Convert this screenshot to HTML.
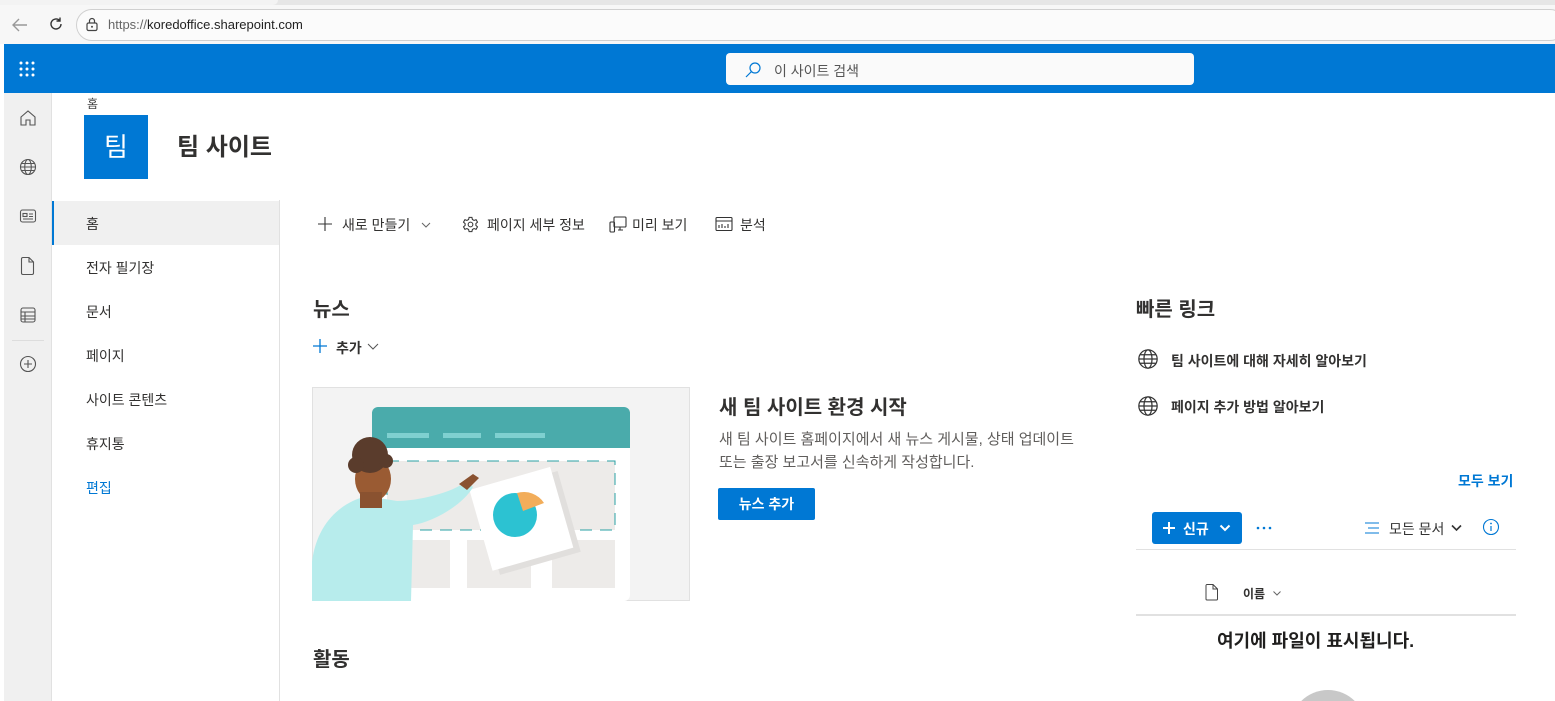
<!DOCTYPE html>
<html style="width:1555px;height:701px;overflow:hidden"><head><meta charset="utf-8"><style>
*{box-sizing:border-box;margin:0;padding:0}
body{width:1555px;height:701px;overflow:hidden;background:#fff;font-family:"Liberation Sans","Noto Sans CJK KR",sans-serif;color:#323130;position:relative}
.abs{position:absolute}
.t{font-size:14px;color:#323130}
</style></head><body>
<div class="abs" style="left:0;top:0;width:1555px;height:44px;background:#f7f7f7"></div>
<div class="abs" style="left:0;top:0;width:1555px;height:5px;background:#e6e6e6"></div>
<div class="abs" style="left:0;top:0;width:278px;height:5px;background:#f3f3f3;border-radius:0 0 6px 0"></div>
<div class="abs" style="left:76px;top:9px;width:1490px;height:32px;border:1px solid #d0d0d0;border-radius:16px;background:#fbfbfb"></div>
<svg class="abs" style="left:10px;top:16px" width="20" height="18" viewBox="0 0 20 18"><path d="M17 9H3M9 3L3 9l6 6" stroke="#999" stroke-width="1.4" fill="none"/></svg>
<svg class="abs" style="left:48px;top:16px" width="16" height="16" viewBox="0 0 16 16"><path d="M13 8a5 5 0 1 1-1.5-3.6M12 1.5v3.5H8.5" stroke="#333" stroke-width="1.4" fill="none"/></svg>
<svg class="abs" style="left:85px;top:16px" width="14" height="16" viewBox="0 0 14 16"><rect x="2" y="7" width="10" height="7.5" rx="1.5" stroke="#444" fill="none" stroke-width="1.2"/><path d="M4.5 7V5a2.5 2.5 0 0 1 5 0v2" stroke="#444" fill="none" stroke-width="1.2"/><circle cx="7" cy="10.7" r="1" fill="#444"/></svg>
<div class="abs" style="left:108px;top:17px;font-size:13px;color:#222"><span style="color:#666">https://</span>koredoffice.sharepoint.com</div>
<div class="abs" style="left:4px;top:44px;width:1551px;height:49px;background:#0078d4"></div>
<svg class="abs" style="left:19px;top:61px" width="16" height="16"><g fill="#fff"><circle cx="2" cy="2" r="1.5"/><circle cx="8" cy="2" r="1.5"/><circle cx="14" cy="2" r="1.5"/><circle cx="2" cy="8" r="1.5"/><circle cx="8" cy="8" r="1.5"/><circle cx="14" cy="8" r="1.5"/><circle cx="2" cy="14" r="1.5"/><circle cx="8" cy="14" r="1.5"/><circle cx="14" cy="14" r="1.5"/></g></svg>
<div class="abs" style="left:726px;top:53px;width:468px;height:32px;background:#fafafa;border-radius:4px"></div>
<svg class="abs" style="left:744px;top:61px" width="18" height="18"><circle cx="11" cy="7" r="5" stroke="#0078d4" fill="none" stroke-width="1.2"/><path d="M7.5 10.5L2 16" stroke="#0078d4" stroke-width="1.2"/></svg>
<div class="abs" style="left:774px;top:61px;font-size:14px;color:#555">이 사이트 검색</div>
<div class="abs" style="left:4px;top:93px;width:48px;height:608px;background:#f0f0f0;border-right:1px solid #e1e1e1"></div>
<svg class="abs" style="left:19px;top:109px" width="18" height="18" viewBox="0 0 18 18"><path d="M2 8L9 2l7 6v8h-5v-5H7v5H2z" stroke="#555" fill="none" stroke-width="1.1"/></svg>
<svg class="abs" style="left:19px;top:158px" width="18" height="18" viewBox="0 0 18 18"><g stroke="#555" fill="none" stroke-width="1.1"><circle cx="9" cy="9" r="7.5"/><ellipse cx="9" cy="9" rx="3.3" ry="7.5"/><path d="M1.5 9h15M2.5 5.5h13M2.5 12.5h13"/></g></svg>
<svg class="abs" style="left:19px;top:207px" width="18" height="18" viewBox="0 0 18 18"><g stroke="#555" fill="none" stroke-width="1.1"><rect x="1.5" y="3" width="15" height="12" rx="2"/><rect x="4" y="6.5" width="4" height="3"/><path d="M10 7h4M10 9.5h4M4 12h10"/></g></svg>
<svg class="abs" style="left:19px;top:256px" width="18" height="20" viewBox="0 0 18 20"><path d="M4 1.5h6l4.5 4.5v11a1.5 1.5 0 0 1-1.5 1.5H4A1.5 1.5 0 0 1 2.5 17V3A1.5 1.5 0 0 1 4 1.5zM10 1.5V6h4.5" stroke="#555" fill="none" stroke-width="1.1"/></svg>
<svg class="abs" style="left:19px;top:306px" width="18" height="18" viewBox="0 0 18 18"><g stroke="#555" fill="none" stroke-width="1.1"><rect x="2" y="2" width="14" height="14" rx="2"/><path d="M2 6h14M2 10h14M2 13h14M6 6v10"/></g></svg>
<div class="abs" style="left:12px;top:340px;width:32px;height:1px;background:#ddd"></div>
<svg class="abs" style="left:19px;top:355px" width="18" height="18" viewBox="0 0 18 18"><g stroke="#555" fill="none" stroke-width="1.1"><circle cx="9" cy="9" r="7.5"/><path d="M9 5v8M5 9h8"/></g></svg>
<div class="abs" style="left:87px;top:95px;font-size:12px;color:#444">홈</div>
<div class="abs" style="left:84px;top:115px;width:64px;height:64px;background:#0078d4;color:#fff;font-size:26px;text-align:center;line-height:64px">팀</div>
<div class="abs" style="left:177px;top:127px;font-size:24px;font-weight:bold;color:#323130">팀 사이트</div>
<div class="abs" style="left:279px;top:200px;width:1px;height:501px;background:#e1e1e1"></div>
<div class="abs" style="left:52px;top:201px;width:227px;height:44px;background:#f0f0f0;border-left:2px solid #0078d4"></div>
<div class="abs t" style="left:86px;top:214px">홈</div>
<div class="abs t" style="left:86px;top:258px">전자 필기장</div>
<div class="abs t" style="left:86px;top:302px">문서</div>
<div class="abs t" style="left:86px;top:346px">페이지</div>
<div class="abs t" style="left:86px;top:390px">사이트 콘텐츠</div>
<div class="abs t" style="left:86px;top:434px">휴지통</div>
<div class="abs t" style="left:86px;top:478px;color:#0078d4">편집</div>
<svg class="abs" style="left:318px;top:217px" width="14" height="14"><path d="M7 0v14M0 7h14" stroke="#333" stroke-width="1.1"/></svg>
<div class="abs t" style="left:342px;top:215px">새로 만들기</div>
<svg class="abs" style="left:421px;top:222px" width="10" height="6"><path d="M1 1l4 4 4-4" stroke="#666" fill="none"/></svg>
<svg class="abs" style="left:462px;top:216px" width="17" height="17" viewBox="0 0 18 18"><g stroke="#333" fill="none" stroke-width="1.1"><circle cx="9" cy="9" r="2.5"/><path d="M7.5 1.5h3l.5 2.2 1.8 1 2.1-.8 1.5 2.6-1.7 1.5v2l1.7 1.5-1.5 2.6-2.1-.8-1.8 1-.5 2.2h-3l-.5-2.2-1.8-1-2.1.8-1.5-2.6 1.7-1.5V8L1.6 6.5l1.5-2.6 2.1.8 1.8-1z"/></g></svg>
<div class="abs t" style="left:487px;top:215px">페이지 세부 정보</div>
<svg class="abs" style="left:609px;top:215px" width="18" height="19" viewBox="0 0 18 19"><g stroke="#333" fill="none" stroke-width="1.1"><rect x="5" y="2" width="12" height="10" rx="1"/><rect x="1" y="7" width="4.5" height="10" rx="1"/><path d="M9 15h5M11 12v3"/></g></svg>
<div class="abs t" style="left:632px;top:215px">미리 보기</div>
<svg class="abs" style="left:715px;top:216px" width="18" height="16" viewBox="0 0 18 16"><g stroke="#333" fill="none" stroke-width="1.1"><rect x="1" y="1.5" width="16" height="13" rx="1"/><path d="M1 5h16M4 12V9M7 12V8M10 12V10M13 12V8"/></g></svg>
<div class="abs t" style="left:740px;top:215px">분석</div>
<div class="abs" style="left:313px;top:293px;font-size:20px;font-weight:bold">뉴스</div>
<svg class="abs" style="left:313px;top:339px" width="14" height="14"><path d="M7 0v14M0 7h14" stroke="#0078d4" stroke-width="1.3"/></svg>
<div class="abs" style="left:336px;top:338px;font-size:14px;font-weight:bold">추가</div>
<svg class="abs" style="left:367px;top:343px" width="12" height="7"><path d="M1 1l5 5 5-5" stroke="#555" fill="none"/></svg>
<svg class="abs" style="left:312px;top:387px" width="378" height="214" viewBox="0 0 378 214">
<rect x="0.5" y="0.5" width="377" height="213" fill="#f3f3f3" stroke="#e1e1e1"/>
<rect x="60" y="20" width="258" height="194" rx="6" fill="#fff"/>
<path d="M66 20h246a6 6 0 0 1 6 6v35H60V26a6 6 0 0 1 6-6z" fill="#4aabab"/>
<rect x="75" y="46" width="42" height="5" fill="#7fd0d0"/><rect x="131" y="46" width="38" height="5" fill="#7fd0d0"/><rect x="183" y="46" width="50" height="5" fill="#7fd0d0"/>
<rect x="75" y="74" width="228" height="69" fill="#edebe9" stroke="#2aa0a4" stroke-dasharray="12 8"/>
<rect x="90" y="153" width="48" height="48" fill="#edebe9"/><rect x="155" y="153" width="64" height="48" fill="#edebe9"/><rect x="240" y="153" width="63" height="48" fill="#edebe9"/>
<g transform="rotate(-16 208 127)"><rect x="172" y="96" width="84" height="84" fill="#e1dfdd"/><rect x="166" y="90" width="84" height="84" fill="#fff"/></g>
<circle cx="203" cy="128" r="22" fill="#2cc2d2"/>
<path d="M205 106l6 18 21-8a24 24 0 0 0-27-10z" fill="#f2ad5a"/>
<path d="M0 214V175c5-40 30-60 55-66l30 5c20 0 55-8 70-20l6 6c-10 18-40 35-60 38l-2 76z" fill="#b7ecec"/>
<path d="M147 97l14-10 6 4-12 12z" fill="#8a5230"/>
<ellipse cx="61" cy="92" rx="18" ry="22" fill="#9a5b33"/>
<path d="M48 105h22v16H48z" fill="#8a5230"/>
<circle cx="58" cy="68" r="18" fill="#5a3c2c"/><circle cx="44" cy="78" r="8" fill="#5a3c2c"/><circle cx="74" cy="74" r="7" fill="#5a3c2c"/>
</svg>
<div class="abs" style="left:719px;top:391px;font-size:20px;font-weight:bold">새 팀 사이트 환경 시작</div>
<div class="abs" style="left:719px;top:428px;font-size:15px;color:#605e5c;line-height:23px;white-space:nowrap">새 팀 사이트 홈페이지에서 새 뉴스 게시물, 상태 업데이트<br>또는 출장 보고서를 신속하게 작성합니다.</div>
<div class="abs" style="left:718px;top:488px;width:97px;height:32px;background:#0078d4;border-radius:2px;color:#fff;font-size:14px;font-weight:bold;text-align:center;line-height:32px">뉴스 추가</div>
<div class="abs" style="left:313px;top:643px;font-size:20px;font-weight:bold">활동</div>
<div class="abs" style="left:1136px;top:293px;font-size:20px;font-weight:bold">빠른 링크</div>
<svg class="abs" style="left:1137px;top:348px" width="22" height="22" viewBox="0 0 18 18"><g stroke="#333" fill="none" stroke-width="1"><circle cx="9" cy="9" r="7.5"/><ellipse cx="9" cy="9" rx="3.3" ry="7.5"/><path d="M1.5 9h15M2.5 5.5h13M2.5 12.5h13"/></g></svg>
<div class="abs" style="left:1171px;top:351px;font-size:14px;font-weight:bold">팀 사이트에 대해 자세히 알아보기</div>
<svg class="abs" style="left:1137px;top:395px" width="22" height="22" viewBox="0 0 18 18"><g stroke="#333" fill="none" stroke-width="1"><circle cx="9" cy="9" r="7.5"/><ellipse cx="9" cy="9" rx="3.3" ry="7.5"/><path d="M1.5 9h15M2.5 5.5h13M2.5 12.5h13"/></g></svg>
<div class="abs" style="left:1171px;top:397px;font-size:14px;font-weight:bold">페이지 추가 방법 알아보기</div>
<div class="abs" style="left:1458px;top:471px;font-size:14px;font-weight:bold;color:#0078d4">모두 보기</div>
<div class="abs" style="left:1152px;top:512px;width:90px;height:32px;background:#0078d4;border-radius:3px"></div>
<svg class="abs" style="left:1162px;top:521px" width="14" height="14"><path d="M7 1v12M1 7h12" stroke="#fff" stroke-width="2"/></svg>
<div class="abs" style="left:1183px;top:519px;font-size:14px;font-weight:bold;color:#fff">신규</div>
<svg class="abs" style="left:1219px;top:524px" width="12" height="8"><path d="M1.5 1.5l4.5 4.5 4.5-4.5" stroke="#fff" stroke-width="2" fill="none"/></svg>
<svg class="abs" style="left:1256px;top:526px" width="16" height="4"><g fill="#0078d4"><circle cx="2" cy="2" r="1.3"/><circle cx="8" cy="2" r="1.3"/><circle cx="14" cy="2" r="1.3"/></g></svg>
<svg class="abs" style="left:1364px;top:520px" width="16" height="16"><path d="M1 3h14M4 8h11M1 13h14" stroke="#0078d4" stroke-width="1.1"/></svg>
<div class="abs" style="left:1389px;top:519px;font-size:14px;color:#333">모든 문서</div>
<svg class="abs" style="left:1451px;top:524px" width="11" height="8"><path d="M1 1.5l4.5 4.5 4.5-4.5" stroke="#333" stroke-width="1.6" fill="none"/></svg>
<svg class="abs" style="left:1482px;top:518px" width="18" height="18"><circle cx="9" cy="9" r="7.5" stroke="#0078d4" fill="none" stroke-width="1.1"/><path d="M9 8v5" stroke="#0078d4" stroke-width="1.2"/><circle cx="9" cy="5.5" r=".9" fill="#0078d4"/></svg>
<div class="abs" style="left:1136px;top:549px;width:380px;height:1px;background:#e1e1e1"></div>
<svg class="abs" style="left:1205px;top:584px" width="14" height="17" viewBox="0 0 14 17"><path d="M2 .5h6l4.5 4.5v10a1 1 0 0 1-1 1H2a1 1 0 0 1-1-1v-13.5a1 1 0 0 1 1-1zM8 .5V5h4.5" stroke="#444" fill="none"/></svg>
<div class="abs" style="left:1243px;top:585px;font-size:12px;font-weight:bold">이름</div>
<svg class="abs" style="left:1273px;top:591px" width="8" height="5"><path d="M.5.5l3.5 3.5 3.5-3.5" stroke="#666" fill="none"/></svg>
<div class="abs" style="left:1136px;top:614px;width:380px;height:2px;background:#e1e1e1"></div>
<div class="abs" style="left:1217px;top:627px;font-size:18px;font-weight:bold;color:#201f1e">여기에 파일이 표시됩니다.</div>
<div class="abs" style="left:1290px;top:690px;width:76px;height:11px;overflow:hidden"><div style="width:76px;height:76px;border-radius:50%;background:#c8c8c8"></div></div>
</body></html>
